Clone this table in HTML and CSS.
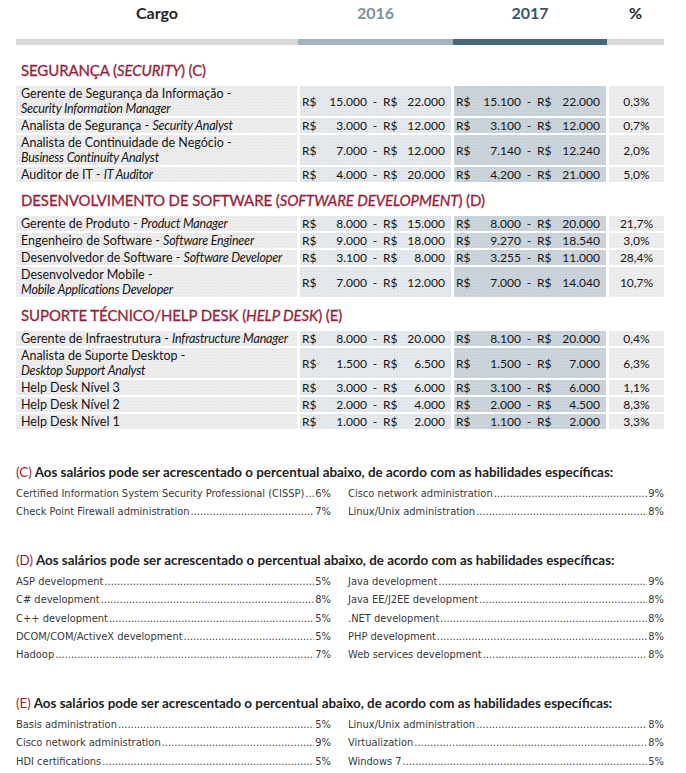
FILE: index.html
```html
<!DOCTYPE html>
<html lang="pt-BR">
<head>
<meta charset="utf-8">
<title>Salários TI</title>
<link rel="stylesheet" href="styles.css">
</head>
<body>
<div class="page">
  <div class="thead">
    <div class="th w1">Cargo</div>
    <div class="th w2 y16">2016</div>
    <div class="th w3 y17">2017</div>
    <div class="th w4">%</div>
  </div>
  <div class="bar">
    <span class="w1 b-grey"></span><span class="w2 b-light"></span><span class="w3 b-dark"></span><span class="w4 b-grey"></span>
  </div>

  <section class="sec">
    <h2 class="sec-title">SEGURANÇA (<em>SECURITY</em>) (C)</h2>
    <div class="rows">
      <div class="row dbl">
        <div class="c-cargo">Gerente de Segurança da Informação -<br><em>Security Information Manager</em></div>
        <div class="c-range c16"><span>R$</span><span class="n">15.000</span><span class="d">-</span><span>R$</span><span class="n">22.000</span></div>
        <div class="c-range c17"><span>R$</span><span class="n">15.100</span><span class="d">-</span><span>R$</span><span class="n">22.000</span></div>
        <div class="c-pct">0,3%</div>
      </div>
      <div class="row">
        <div class="c-cargo">Analista de Segurança - <em>Security Analyst</em></div>
        <div class="c-range c16"><span>R$</span><span class="n">3.000</span><span class="d">-</span><span>R$</span><span class="n">12.000</span></div>
        <div class="c-range c17"><span>R$</span><span class="n">3.100</span><span class="d">-</span><span>R$</span><span class="n">12.000</span></div>
        <div class="c-pct">0,7%</div>
      </div>
      <div class="row dbl">
        <div class="c-cargo">Analista de Continuidade de Negócio -<br><em>Business Continuity Analyst</em></div>
        <div class="c-range c16"><span>R$</span><span class="n">7.000</span><span class="d">-</span><span>R$</span><span class="n">12.000</span></div>
        <div class="c-range c17"><span>R$</span><span class="n">7.140</span><span class="d">-</span><span>R$</span><span class="n">12.240</span></div>
        <div class="c-pct">2,0%</div>
      </div>
      <div class="row">
        <div class="c-cargo">Auditor de IT - <em>IT Auditor</em></div>
        <div class="c-range c16"><span>R$</span><span class="n">4.000</span><span class="d">-</span><span>R$</span><span class="n">20.000</span></div>
        <div class="c-range c17"><span>R$</span><span class="n">4.200</span><span class="d">-</span><span>R$</span><span class="n">21.000</span></div>
        <div class="c-pct">5,0%</div>
      </div>
    </div>
  </section>

  <section class="sec">
    <h2 class="sec-title">DESENVOLVIMENTO DE SOFTWARE (<em>SOFTWARE DEVELOPMENT</em>) (D)</h2>
    <div class="rows">
      <div class="row">
        <div class="c-cargo">Gerente de Produto - <em>Product Manager</em></div>
        <div class="c-range c16"><span>R$</span><span class="n">8.000</span><span class="d">-</span><span>R$</span><span class="n">15.000</span></div>
        <div class="c-range c17"><span>R$</span><span class="n">8.000</span><span class="d">-</span><span>R$</span><span class="n">20.000</span></div>
        <div class="c-pct">21,7%</div>
      </div>
      <div class="row">
        <div class="c-cargo">Engenheiro de Software - <em>Software Engineer</em></div>
        <div class="c-range c16"><span>R$</span><span class="n">9.000</span><span class="d">-</span><span>R$</span><span class="n">18.000</span></div>
        <div class="c-range c17"><span>R$</span><span class="n">9.270</span><span class="d">-</span><span>R$</span><span class="n">18.540</span></div>
        <div class="c-pct">3,0%</div>
      </div>
      <div class="row">
        <div class="c-cargo">Desenvolvedor de Software - <em>Software Developer</em></div>
        <div class="c-range c16"><span>R$</span><span class="n">3.100</span><span class="d">-</span><span>R$</span><span class="n">8.000</span></div>
        <div class="c-range c17"><span>R$</span><span class="n">3.255</span><span class="d">-</span><span>R$</span><span class="n">11.000</span></div>
        <div class="c-pct">28,4%</div>
      </div>
      <div class="row dbl">
        <div class="c-cargo">Desenvolvedor Mobile -<br><em>Mobile Applications Developer</em></div>
        <div class="c-range c16"><span>R$</span><span class="n">7.000</span><span class="d">-</span><span>R$</span><span class="n">12.000</span></div>
        <div class="c-range c17"><span>R$</span><span class="n">7.000</span><span class="d">-</span><span>R$</span><span class="n">14.040</span></div>
        <div class="c-pct">10,7%</div>
      </div>
    </div>
  </section>

  <section class="sec">
    <h2 class="sec-title">SUPORTE TÉCNICO/HELP DESK (<em>HELP DESK</em>) (E)</h2>
    <div class="rows">
      <div class="row">
        <div class="c-cargo">Gerente de Infraestrutura - <em>Infrastructure Manager</em></div>
        <div class="c-range c16"><span>R$</span><span class="n">8.000</span><span class="d">-</span><span>R$</span><span class="n">20.000</span></div>
        <div class="c-range c17"><span>R$</span><span class="n">8.100</span><span class="d">-</span><span>R$</span><span class="n">20.000</span></div>
        <div class="c-pct">0,4%</div>
      </div>
      <div class="row dbl">
        <div class="c-cargo">Analista de Suporte Desktop -<br><em>Desktop Support Analyst</em></div>
        <div class="c-range c16"><span>R$</span><span class="n">1.500</span><span class="d">-</span><span>R$</span><span class="n">6.500</span></div>
        <div class="c-range c17"><span>R$</span><span class="n">1.500</span><span class="d">-</span><span>R$</span><span class="n">7.000</span></div>
        <div class="c-pct">6,3%</div>
      </div>
      <div class="row">
        <div class="c-cargo">Help Desk Nível 3</div>
        <div class="c-range c16"><span>R$</span><span class="n">3.000</span><span class="d">-</span><span>R$</span><span class="n">6.000</span></div>
        <div class="c-range c17"><span>R$</span><span class="n">3.100</span><span class="d">-</span><span>R$</span><span class="n">6.000</span></div>
        <div class="c-pct">1,1%</div>
      </div>
      <div class="row">
        <div class="c-cargo">Help Desk Nível 2</div>
        <div class="c-range c16"><span>R$</span><span class="n">2.000</span><span class="d">-</span><span>R$</span><span class="n">4.000</span></div>
        <div class="c-range c17"><span>R$</span><span class="n">2.000</span><span class="d">-</span><span>R$</span><span class="n">4.500</span></div>
        <div class="c-pct">8,3%</div>
      </div>
      <div class="row">
        <div class="c-cargo">Help Desk Nível 1</div>
        <div class="c-range c16"><span>R$</span><span class="n">1.000</span><span class="d">-</span><span>R$</span><span class="n">2.000</span></div>
        <div class="c-range c17"><span>R$</span><span class="n">1.100</span><span class="d">-</span><span>R$</span><span class="n">2.000</span></div>
        <div class="c-pct">3,3%</div>
      </div>
    </div>
  </section>

  <div class="note">
    <p class="note-title"><span class="tag">(C)</span> Aos salários pode ser acrescentado o percentual abaixo, de acordo com as habilidades específicas:</p>
    <div class="note-grid">
      <ul class="list">
        <li><span class="lbl">Certified Information System Security Professional (CISSP)</span><span class="lead"></span><span class="val">6%</span></li>
        <li><span class="lbl">Check Point Firewall administration</span><span class="lead"></span><span class="val">7%</span></li>
      </ul>
      <ul class="list">
        <li><span class="lbl">Cisco network administration</span><span class="lead"></span><span class="val">9%</span></li>
        <li><span class="lbl">Linux/Unix administration</span><span class="lead"></span><span class="val">8%</span></li>
      </ul>
    </div>
  </div>

  <div class="note">
    <p class="note-title"><span class="tag">(D)</span> Aos salários pode ser acrescentado o percentual abaixo, de acordo com as habilidades específicas:</p>
    <div class="note-grid">
      <ul class="list">
        <li><span class="lbl">ASP development</span><span class="lead"></span><span class="val">5%</span></li>
        <li><span class="lbl">C# development</span><span class="lead"></span><span class="val">8%</span></li>
        <li><span class="lbl">C++ development</span><span class="lead"></span><span class="val">5%</span></li>
        <li><span class="lbl">DCOM/COM/ActiveX development</span><span class="lead"></span><span class="val">5%</span></li>
        <li><span class="lbl">Hadoop</span><span class="lead"></span><span class="val">7%</span></li>
      </ul>
      <ul class="list">
        <li><span class="lbl">Java development</span><span class="lead"></span><span class="val">9%</span></li>
        <li><span class="lbl">Java EE/J2EE development</span><span class="lead"></span><span class="val">8%</span></li>
        <li><span class="lbl">.NET development</span><span class="lead"></span><span class="val">8%</span></li>
        <li><span class="lbl">PHP development</span><span class="lead"></span><span class="val">8%</span></li>
        <li><span class="lbl">Web services development</span><span class="lead"></span><span class="val">8%</span></li>
      </ul>
    </div>
  </div>

  <div class="note">
    <p class="note-title"><span class="tag">(E)</span> Aos salários pode ser acrescentado o percentual abaixo, de acordo com as habilidades específicas:</p>
    <div class="note-grid">
      <ul class="list">
        <li><span class="lbl">Basis administration</span><span class="lead"></span><span class="val">5%</span></li>
        <li><span class="lbl">Cisco network administration</span><span class="lead"></span><span class="val">9%</span></li>
        <li><span class="lbl">HDI certifications</span><span class="lead"></span><span class="val">5%</span></li>
      </ul>
      <ul class="list">
        <li><span class="lbl">Linux/Unix administration</span><span class="lead"></span><span class="val">8%</span></li>
        <li><span class="lbl">Virtualization</span><span class="lead"></span><span class="val">8%</span></li>
        <li><span class="lbl">Windows 7</span><span class="lead"></span><span class="val">5%</span></li>
      </ul>
    </div>
  </div>
</div>
</body>
</html>
```

FILE: styles.css
```css
html, body {
  margin: 0;
  padding: 0;
  background: #ffffff;
}
body {
  font-family: Lato, "Noto Sans", sans-serif;
  color: #151515;
}
.page {
  width: 648px;
  padding: 0 0 0 16px;
}

/* header */
.thead {
  display: flex;
  height: 26px;
  line-height: 26px;
  font-weight: 700;
  font-size: 16px;
}
.th { text-align: center; color: #262626; }
.th.y16 { color: #7b93a0; }
.th.y17 { color: #3b5566; }
.w1 { width: 282px; }
.w2 { width: 155px; }
.w3 { width: 154px; }
.w4 { width: 57px; }
.bar {
  display: flex;
  height: 6px;
  margin-top: 13px;
}
.bar span { display: block; height: 6px; }
.b-grey { background: #d8d8d8; }
.b-light { background: #a3b4bc; }
.b-dark { background: #476678; }

/* sections */
.sec { margin-top: 15px; }
.sec + .sec { margin-top: 8px; }
.sec-title {
  margin: 0 0 6px 5px;
  font-size: 15px;
  line-height: 20px;
  font-weight: 400;
  color: #a01c36;
  letter-spacing: -0.1px;
  -webkit-text-stroke: 0.3px #a01c36;
}
.sec-title em { font-style: italic; }
.rows {
  display: flex;
  flex-direction: column;
  gap: 2px;
}
.row {
  display: grid;
  grid-template-columns: 281px 151px 152px 55px;
  column-gap: 3px;
  height: 15px;
  font-size: 12px;
  line-height: 15px;
}
.row.dbl { height: 30px; }
.c-cargo {
  background-color: #ededed;
  padding-left: 5px;
  font-size: 12.5px;
  white-space: nowrap;
}
.c-cargo em { letter-spacing: -0.2px; }
.c-range {
  display: grid;
  grid-template-columns: 14px 51px 16px 14px 1fr;
  align-items: center;
  padding: 0 6px 0 2px;
}
.c-cargo, .c-range, .c-pct {
  background-image: radial-gradient(circle, rgba(0, 0, 0, 0.05) 0.7px, transparent 0.9px);
  background-size: 3px 3px;
}
.c16 { background-color: #e4e9ed; }
.c17 { background-color: #cad4da; }
.c-range .n { text-align: right; }
.c-range .d { text-align: center; }
.c-pct {
  background-color: #ededed;
  display: flex;
  align-items: center;
  justify-content: center;
}

/* notes */
.note { margin-top: 34px; }
.note + .note { margin-top: 29.5px; }
.note-title {
  margin: 0 0 4px 0;
  font-size: 13.4px;
  line-height: 18px;
  font-weight: 700;
  color: #232323;
}
.note-title .tag { color: #b01630; font-weight: 400; }
.note-grid {
  display: grid;
  grid-template-columns: 315px 316px;
  column-gap: 17px;
}
.list {
  list-style: none;
  margin: 0;
  padding: 0;
  font-family: "DejaVu Sans", sans-serif;
  font-stretch: condensed;
  font-size: 11px;
  color: #3a3a3a;
}
.list li {
  display: flex;
  height: 18.3px;
  line-height: 18px;
  white-space: nowrap;
}
.lbl { flex: none; }
.lead {
  flex: 1;
  overflow: hidden;
  margin: 0 1px;
}
.lead::after {
  content: "................................................................................................................................................";
}
.val { flex: none; }
```
